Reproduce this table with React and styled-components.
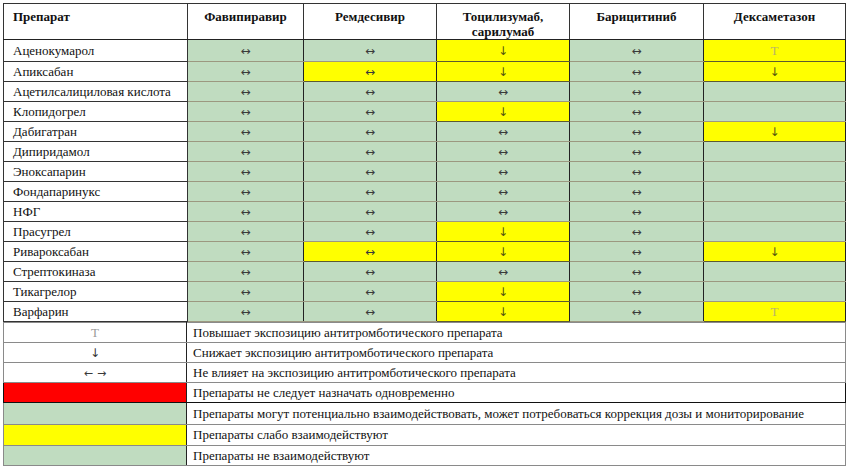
import React from "react";
import styled, { createGlobalStyle } from "styled-components";

const GREEN = "#c0dcc0";
const YELLOW = "#ffff00";
const RED = "#ff0000";
const SERIF = `"Liberation Serif", "Times New Roman", serif`;

const drugs = ["Фавипиравир", "Ремдесивир", "Тоцилизумаб, сарилумаб", "Барицитиниб", "Дексаметазон"];
const widths = [184, 116, 133, 133, 134, 142];

// g = green, y = yellow; b = ↔, d = ↓, u = ↑, "" = empty
const rows = [
  ["Аценокумарол", ["g:b", "g:b", "y:d", "g:b", "y:u"]],
  ["Апиксабан", ["g:b", "y:b", "y:d", "g:b", "y:d"]],
  ["Ацетилсалициловая кислота", ["g:b", "g:b", "g:b", "g:b", "g:"]],
  ["Клопидогрел", ["g:b", "g:b", "y:d", "g:b", "g:"]],
  ["Дабигатран", ["g:b", "g:b", "g:b", "g:b", "y:d"]],
  ["Дипиридамол", ["g:b", "g:b", "g:b", "g:b", "g:"]],
  ["Эноксапарин", ["g:b", "g:b", "g:b", "g:b", "g:"]],
  ["Фондапаринукс", ["g:b", "g:b", "g:b", "g:b", "g:"]],
  ["НФГ", ["g:b", "g:b", "g:b", "g:b", "g:"]],
  ["Прасугрел", ["g:b", "g:b", "y:d", "g:b", "g:"]],
  ["Ривароксабан", ["g:b", "y:b", "y:d", "g:b", "y:d"]],
  ["Стрептокиназа", ["g:b", "g:b", "g:b", "g:b", "g:"]],
  ["Тикагрелор", ["g:b", "g:b", "y:d", "g:b", "g:"]],
  ["Варфарин", ["g:b", "g:b", "y:d", "g:b", "y:u"]],
];

const legend = [
  { mark: "u", text: "Повышает экспозицию антитромботического препарата" },
  { mark: "d", text: "Снижает экспозицию антитромботического препарата" },
  { mark: "w", text: "Не влияет на экспозицию антитромботического препарата" },
  { color: RED, text: "Препараты не следует назначать одновременно", dark: true },
  { color: GREEN, text: "Препараты могут потенциально взаимодействовать, может потребоваться коррекция дозы и мониторирование", h: 21 },
  { color: YELLOW, text: "Препараты слабо взаимодействуют", h: 20 },
  { color: GREEN, text: "Препараты не взаимодействуют" },
];

const glyphs = { b: "↔", d: "↓", u: "T", w: "←→" };

const Global = createGlobalStyle`
  body {
    margin: 0;
    background: #fff;
    font-family: ${SERIF};
    color: #111;
  }
`;

const Page = styled.div`
  padding: 3px 2px 0 3px;
  width: 842px;
`;

const Table = styled.table`
  width: 842px;
  table-layout: fixed;
  border-collapse: collapse;
  font-family: ${SERIF};
  font-size: 13px;
  color: #111;
  border: 1px solid #555;
`;

const Head = styled.th`
  height: 29px;
  padding: 5px 4px 0;
  vertical-align: top;
  text-align: ${(p) => (p.$left ? "left" : "center")};
  padding-left: ${(p) => (p.$left ? "9px" : "4px")};
  font-weight: 700;
  line-height: 15px;
  background: #fff;
  border: 1px solid #333;
  border-bottom-color: #222;
`;

const Name = styled.td`
  height: ${(p) => p.$h}px;
  padding: 0 0 0 9px;
  background: #fff;
  white-space: nowrap;
  border: 1px solid #333;
  border-top-color: #444;
  line-height: 16px;
`;

const Cell = styled.td`
  height: ${(p) => p.$h}px;
  padding: 0;
  text-align: center;
  background: ${(p) => (p.$tone === "y" ? YELLOW : GREEN)};
  border-left: 1px solid #222;
  border-right: 1px solid #222;
  border-top: 1px solid ${(p) => (p.$tone === "y" ? "#5c5a30" : "#9c9880")};
  border-bottom: 1px solid ${(p) => (p.$tone === "y" ? "#5c5a30" : "#9c9880")};
`;

const Mark = styled.span`
  display: inline-block;
  font-family: ${(p) => (p.$kind === "u" ? SERIF : `"DejaVu Sans", sans-serif`)};
  line-height: 12px;
  font-size: ${(p) => (p.$kind === "u" ? 13 : p.$kind === "w" ? 11 : 12)}px;
  color: ${(p) =>
    p.$kind === "u" ? "#b9b36a" : p.$kind === "d" ? "#55550f" : "#3a3a3a"};
  ${(p) => p.$legend && p.$kind === "u" && "color: #9a9a9a;"}
  ${(p) => p.$legend && p.$kind === "d" && "color: #333;"}
  ${(p) => p.$kind === "w" && "letter-spacing: 4px; margin-left: 4px;"}
`;

const Legend = styled.table`
  width: 842px;
  table-layout: fixed;
  border-collapse: collapse;
  font-family: ${SERIF};
  font-size: 13px;
  color: #111;
  border: 1px solid #444;
`;

const Swatch = styled.td`
  height: ${(p) => p.$h}px;
  padding: 0;
  text-align: center;
  background: ${(p) => p.$color || "#fff"};
  border: 1px solid ${(p) => (p.$dark ? "#111" : "#8a8a8a")};
  border-right: 1px solid #222;
`;

const Note = styled.td`
  padding: 0 0 0 6px;
  background: #fff;
  white-space: nowrap;
  line-height: 16px;
  border: 1px solid ${(p) => (p.$dark ? "#111" : "#8a8a8a")};
`;

export default function App() {
  return (
    <>
      <Global />
      <Page>
        <Table>
          <colgroup>
            {widths.map((w, i) => (
              <col key={i} style={{ width: w }} />
            ))}
          </colgroup>
          <thead>
            <tr>
              <Head $left>Препарат</Head>
              {drugs.map((d) => (
                <Head key={d}>{d}</Head>
              ))}
            </tr>
          </thead>
          <tbody>
            {rows.map(([name, cells], r) => {
              const h = r === 0 ? 21 : 19;
              return (
                <tr key={name}>
                  <Name $h={h}>{name}</Name>
                  {cells.map((c, i) => {
                    const [tone, mark] = c.split(":");
                    return (
                      <Cell key={i} $tone={tone} $h={h}>
                        {mark && <Mark $kind={mark}>{glyphs[mark]}</Mark>}
                      </Cell>
                    );
                  })}
                </tr>
              );
            })}
          </tbody>
        </Table>
        <Legend>
          <colgroup>
            <col style={{ width: 183 }} />
            <col style={{ width: 659 }} />
          </colgroup>
          <tbody>
            {legend.map((l, i) => (
              <tr key={i}>
                <Swatch $color={l.color} $dark={l.dark} $h={l.h || 19}>
                  {l.mark && (
                    <Mark $kind={l.mark} $legend>
                      {glyphs[l.mark]}
                    </Mark>
                  )}
                </Swatch>
                <Note $dark={l.dark}>{l.text}</Note>
              </tr>
            ))}
          </tbody>
        </Legend>
      </Page>
    </>
  );
}
